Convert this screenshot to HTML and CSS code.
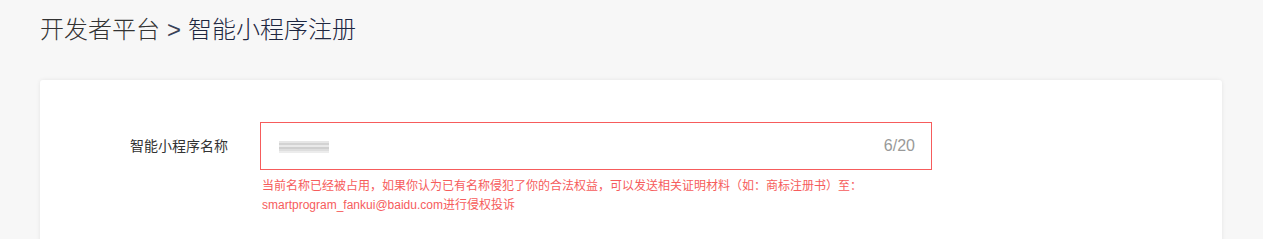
FILE: index.html
```html
<!DOCTYPE html>
<html lang="zh-CN">

<head>
    <meta charset="UTF-8">
    <meta name="viewport" content="width=device-width, initial-scale=1.0">
    <title>智能小程序注册</title>
    <link rel="stylesheet" href="styles.css">
</head>

<body>
    <div class="page">
        <h1 class="crumbs">
            <span class="crumb-root">开发者平台</span>
            <span class="crumb-sep">&gt;</span>
            <span class="crumb-current">智能小程序注册</span>
        </h1>

        <div class="card">
            <div class="form-row">
                <label class="form-label" for="appName">智能小程序名称</label>
                <div class="form-field">
                    <div class="input-box error">
                        <div class="input-value" id="appName"><span class="blurred"></span></div>
                        <span class="counter">6/20</span>
                    </div>
                    <div class="error-msg">当前名称已经被占用，如果你认为已有名称侵犯了你的合法权益，可以发送相关证明材料（如：商标注册书）至：smartprogram_fankui@baidu.com进行侵权投诉</div>
                </div>
            </div>
        </div>
    </div>
</body>

</html>
```

FILE: styles.css
```css
body {
    margin: 0;
    background-color: #f7f7f7;
    font-family: "Liberation Sans", "Noto Sans CJK SC", sans-serif;
    color: #333;
}

.page {
    padding: 12px 41px 0 40px;
}

.crumbs {
    margin: 0;
    font-size: 24px;
    font-weight: 300;
    line-height: 36px;
    height: 36px;
    display: flex;
    gap: 7px;
}

.crumb-root {
    color: #333;
}

.crumb-sep {
    color: #3a4257;
}

.crumb-current {
    color: #1d2640;
}

.card {
    margin-top: 32px;
    background-color: white;
    border-radius: 3px;
    box-shadow: 0 0 4px rgba(0, 0, 0, 0.08);
    padding: 42px 0 40px;
    min-height: 200px;
}

.form-row {
    display: flex;
    align-items: flex-start;
}

.form-label {
    width: 220px;
    padding-right: 32px;
    box-sizing: border-box;
    text-align: right;
    font-size: 14px;
    line-height: 48px;
    color: #333;
}

.form-field {
    width: 672px;
}

.input-box {
    height: 48px;
    box-sizing: border-box;
    border: 1px solid #e5e5e5;
    display: flex;
    align-items: center;
    padding: 0 16px 0 18px;
}

.input-box.error {
    border-color: #f65c5c;
}

.input-value {
    flex: 1;
    display: flex;
    align-items: center;
}

.blurred {
    display: block;
    width: 50px;
    height: 12px;
    margin-top: 1px;
    background: linear-gradient(to bottom,
            #e6e6e6 0, #e6e6e6 2px,
            #d3d3d3 2px, #d3d3d3 4px,
            #e9e9e9 4px, #e9e9e9 6px,
            #cfcfcf 6px, #cfcfcf 8px,
            #dedede 8px, #dedede 10px,
            #ececec 10px, #ececec 12px);
}

.counter {
    font-size: 16px;
    color: #999;
}

.error-msg {
    margin-top: 7px;
    padding-left: 2px;
    font-size: 12px;
    line-height: 19px;
    color: #f65c5c;
}
```
